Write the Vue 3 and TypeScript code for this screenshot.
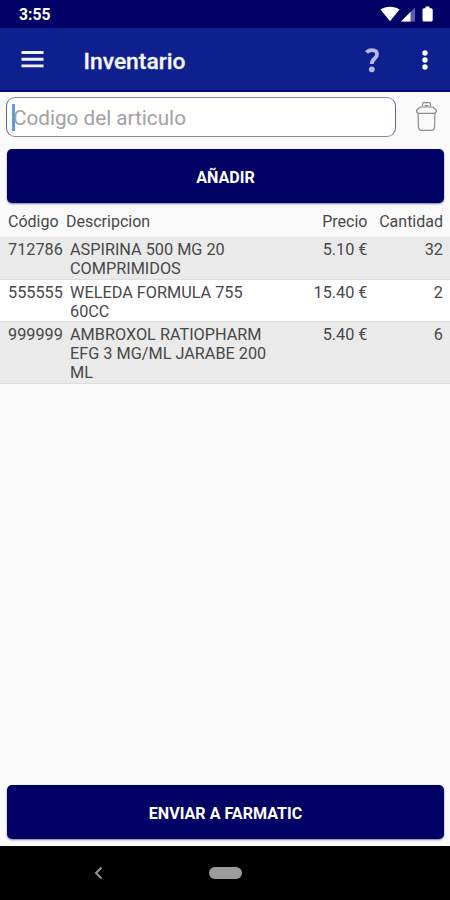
<script setup lang="ts">
interface Article {
  code: string
  description: string[]
  price: string
  quantity: number
}

const articles: Article[] = [
  { code: '712786', description: ['ASPIRINA 500 MG 20', 'COMPRIMIDOS'], price: '5.10 €', quantity: 32 },
  { code: '555555', description: ['WELEDA FORMULA 755', '60CC'], price: '15.40 €', quantity: 2 },
  { code: '999999', description: ['AMBROXOL RATIOPHARM', 'EFG 3 MG/ML JARABE 200', 'ML'], price: '5.40 €', quantity: 6 },
]
</script>

<template>
  <div class="screen">
    <div class="status">
      <span class="clock">3:55</span>
      <svg class="status-icons" width="54" height="18" viewBox="0 0 54 18">
        <path d="M0.500 4.600C5.800 0.800 14.200 0.800 19.500 4.600L10 16.200Z" fill="#fff" />
        <path d="M35 2.500V16.500H21Z" fill="#5a5eae" />
        <path d="M30.500 7V16.500H21Z" fill="#fff" />
        <path d="M45.500 1.500h4v1.700h1.700q1.500 0 1.500 1.500v10.300q0 1.500-1.500 1.500h-7.200q-1.500 0-1.500-1.500V4.700q0-1.500 1.500-1.500h1.500Z" fill="#fff" />
      </svg>
    </div>
    <header class="toolbar">
      <svg class="menu" width="23" height="20" viewBox="0 0 23 20">
        <path d="M0.500 3.500h22M0.500 10.200h22M0.500 16.900h22" stroke="#f4f4ff" stroke-width="2.900" />
      </svg>
      <h1>Inventario</h1>
      <svg class="help" width="18" height="26" viewBox="0 0 18 26">
        <path d="M3.500 5.500C5 3.600 7 3.100 9 3.100C12.200 3.100 14 4.700 14 7.400C14 11.600 8.800 11.500 8.800 17" fill="none" stroke="#b6b8e4" stroke-width="3.800" />
        <circle cx="8.800" cy="22.300" r="2.900" fill="#b6b8e4" />
      </svg>
      <svg class="more" width="8" height="22" viewBox="0 0 8 22">
        <g fill="#fff"><circle cx="4" cy="5" r="2.700" /><circle cx="4" cy="12" r="2.700" /><circle cx="4" cy="19" r="2.700" /></g>
      </svg>
    </header>
    <main>
      <div class="search">
        <div class="field"><span class="caret"></span><span class="hint">Codigo del articulo</span></div>
        <svg class="trash" width="24" height="32" viewBox="0 0 24 32" fill="none" stroke="#8b8b8b" stroke-width="1.200">
          <path d="M7.500 5.500V3Q7.500 1.700 8.800 1.700H14.200Q15.500 1.700 15.500 3V5.500M9.500 4.600h4" />
          <path d="M1.500 9.500L5 6H18L21.500 9.500Q21.500 12.300 18.500 12.300H4.500Q1.500 12.300 1.500 9.500Z" />
          <path d="M3 12.300L3.500 26.500Q3.700 29.300 6.500 29.300H16.500Q19.300 29.300 19.500 26.500L20 12.300" />
        </svg>
      </div>
      <button class="action">AÑADIR</button>
      <div class="row head">
        <span class="code">Código</span><span class="desc">Descripcion</span><span class="price">Precio</span><span class="qty">Cantidad</span>
      </div>
      <div v-for="article in articles" :key="article.code" class="row item">
        <span class="code">{{ article.code }}</span>
        <span class="desc"><span v-for="line in article.description" :key="line" class="line">{{ line }}</span></span>
        <span class="price">{{ article.price }}</span>
        <span class="qty">{{ article.quantity }}</span>
      </div>
      <button class="action send">ENVIAR A FARMATIC</button>
    </main>
    <nav>
      <svg class="back" width="10" height="14" viewBox="0 0 10 14"><path d="M8.500 1.500L3 7L8.500 12.500" fill="none" stroke="#959595" stroke-width="2" /></svg>
      <span class="home"></span>
    </nav>
  </div>
</template>

<style>
body { margin: 0; }
</style>

<style scoped>
.screen {
  width: 450px;
  height: 900px;
  display: flex;
  flex-direction: column;
  overflow: hidden;
  background: #fafafa;
  font-family: Roboto, sans-serif;
  color: #484848;
}
.status {
  box-sizing: border-box;
  height: 28px;
  padding: 0 16px 0 19px;
  display: flex;
  justify-content: space-between;
  align-items: center;
  background: #020266;
  color: #fff;
}
.clock { font-size: 15.7px; font-weight: 700; }
.toolbar {
  box-sizing: border-box;
  height: 64px;
  padding: 0 21px;
  border-bottom: 2px solid #03037c;
  display: flex;
  align-items: center;
  background: #0e1f8e;
}
.toolbar h1 {
  margin: 6px auto 0 39.6px;
  font-size: 22.8px;
  font-weight: 500;
  line-height: 30px;
  color: #f6f6ff;
  -webkit-text-stroke: 0.3px #f6f6ff;
}
.help { margin-top: 2px; margin-right: 40px; }
main {
  flex: 1;
  display: flex;
  flex-direction: column;
}
.search {
  height: 40px;
  margin: 5px 11px 0 6px;
  display: flex;
  justify-content: space-between;
  align-items: center;
}
.field {
  box-sizing: border-box;
  width: 390px;
  height: 40px;
  padding-left: 5px;
  border: 1.5px solid #8a8a9e;
  border-left-color: #6264a4;
  border-right-color: #6264a4;
  border-radius: 9px;
  display: flex;
  align-items: center;
  background: #fff;
}
.caret { width: 2.5px; height: 27px; background: #5c9ce4; }
.hint { margin: 2px 0 0 -1.5px; font-size: 20.7px; color: #a2a2a2; }
.action {
  height: 54px;
  margin: 12px 6px 0 7px;
  padding: 2px 0 0;
  border: 0;
  border-radius: 5px;
  background: #020266;
  box-shadow: 0 1px 2px rgba(0, 0, 60, 0.5);
  color: #fff;
  font: 700 16.1px Roboto, sans-serif;
}
.send { margin-top: auto; margin-bottom: 7px; }
.row {
  box-sizing: border-box;
  padding: 0 7px 0 8px;
  display: grid;
  grid-template-columns: 62px 1fr 80px 75.5px;
  font-size: 16.25px;
  line-height: 19px;
}
.head { height: 34px; padding-top: 9px; grid-template-columns: 58px 1fr 80px 75.5px; font-size: 16px; }
.item {
  padding-top: 3px;
  padding-bottom: 0.5px;
  border-bottom: 1px solid #dedede;
}
.item:nth-of-type(odd) { background: #eaeaea; }
.item:nth-of-type(even) { background: #fff; }
.line { display: block; white-space: nowrap; }
.price, .qty { text-align: right; }
nav {
  height: 54px;
  display: grid;
  grid-template-columns: 93px 1fr;
  align-items: center;
  background: #000;
}
.back { grid-column: 2; grid-row: 1; }
.home {
  grid-column: 1 / -1;
  grid-row: 1;
  justify-self: center;
  width: 33px;
  height: 12px;
  border-radius: 6px;
  background: #9c9c9c;
}
</style>
